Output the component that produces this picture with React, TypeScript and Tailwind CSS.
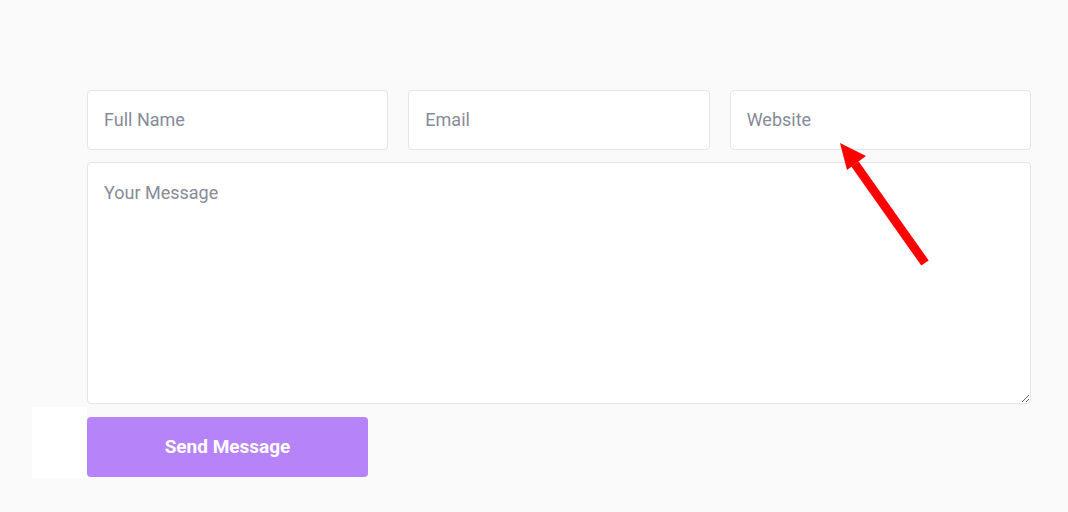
import React from 'react';

const field =
  'h-[60px] w-full rounded-[4px] border border-[#e4e5ea] bg-white px-[16px] pb-[1px] text-[18px] text-[#3f3f46] placeholder:text-[#878b99] outline-none';

export default function App() {
  return (
    <div
      className="relative h-[512px] w-[1068px] bg-[#fafafa]"
      style={{ fontFamily: 'Roboto, "Liberation Sans", sans-serif' }}
    >
      <div className="flex flex-col pl-[87px] pr-[37px] pt-[90px]">
        <div className="grid grid-cols-3 gap-[20px]">
          <input className={field} placeholder="Full Name" />
          <input className={field} placeholder="Email" />
          <input className={field} placeholder="Website" />
        </div>
        <textarea
          className="mt-[12px] h-[242px] w-full rounded-[4px] border border-[#e4e5ea] bg-white px-[16px] py-[18px] text-[18px] leading-[24px] text-[#3f3f46] placeholder:text-[#878b99] outline-none"
          placeholder="Your Message"
        />
        <div className="mt-[3px] flex">
          <div className="-ml-[55px] h-[71px] w-[55px] shrink-0 bg-white" />
          <button className="mt-[10px] h-[60px] w-[281px] rounded-[4px] bg-[#b783f9] text-[19px] font-bold text-white">
            Send Message
          </button>
        </div>
      </div>

      {/* annotation arrow */}
      <svg className="pointer-events-none absolute left-0 top-0" width="1068" height="512">
        <line x1="925" y1="263" x2="855" y2="164" stroke="#ff0000" strokeWidth="9" />
        <polygon points="840,143 866,156 847,170" fill="#ff0000" />
      </svg>
    </div>
  );
}
